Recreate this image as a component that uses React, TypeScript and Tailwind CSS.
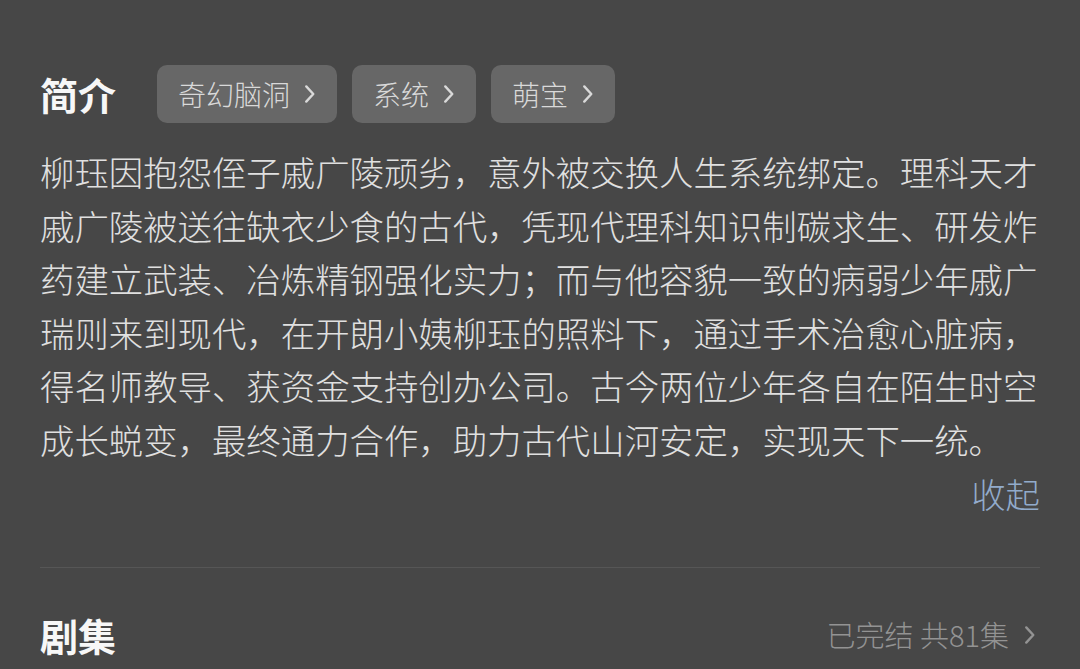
import React from "react";

const Chevron = ({ className }: { className?: string }) => (
  <svg viewBox="0 0 12 20" className={className} fill="none" stroke="currentColor" strokeWidth={2.2} strokeLinecap="round" strokeLinejoin="round">
    <path d="M3 3 L9.5 10 L3 17" />
  </svg>
);

const tags = ["奇幻脑洞", "系统", "萌宝"];

const lines = [
  "柳珏因抱怨侄子戚广陵顽劣，意外被交换人生系统绑定。理科天才",
  "戚广陵被送往缺衣少食的古代，凭现代理科知识制碳求生、研发炸",
  "药建立武装、冶炼精钢强化实力；而与他容貌一致的病弱少年戚广",
  "瑞则来到现代，在开朗小姨柳珏的照料下，通过手术治愈心脏病，",
  "得名师教导、获资金支持创办公司。古今两位少年各自在陌生时空",
  "成长蜕变，最终通力合作，助力古代山河安定，实现天下一统。",
];

export default function App() {
  return (
    <div
      className="w-[1080px] h-[669px] overflow-hidden bg-[#474747] px-[40px] pt-[65px]"
      style={{ fontFamily: '"Noto Sans CJK SC", "Noto Sans", sans-serif' }}
    >
      <div className="flex items-center h-[58px]">
        <h2 className="text-[38px] font-bold text-[#f7f7f7] leading-none mr-[41px]">简介</h2>
        <div className="flex gap-[15px]">
          {tags.map((t) => (
            <div
              key={t}
              className="h-[58px] flex items-center pl-[21px] pr-[21px] rounded-[10px] bg-[#676767] text-[#d9d9d9] text-[28px] font-light leading-none"
            >
              <span>{t}</span>
              <Chevron className="w-[13px] h-[22px] ml-[13px]" />
            </div>
          ))}
        </div>
      </div>
      <div className="mt-[22px] text-[34.4px] font-light leading-[53.6px] text-[#e0e0e0]">
        {lines.map((l, i) => (
          <div key={i} className="whitespace-nowrap">{l}</div>
        ))}
        <div className="text-right text-[#92abcb]">收起</div>
      </div>
      <div className="mt-[47px] h-px bg-[#565656]" />
      <div className="mt-[40px] flex items-center justify-between h-[53px]">
        <h2 className="text-[38px] font-bold text-[#f7f7f7] leading-none">剧集</h2>
        <div className="flex items-center text-[29px] font-light text-[#939393] leading-none pr-[4px]">
          <span>已完结 共81集</span>
          <Chevron className="w-[13px] h-[22px] ml-[14px]" />
        </div>
      </div>
    </div>
  );
}
